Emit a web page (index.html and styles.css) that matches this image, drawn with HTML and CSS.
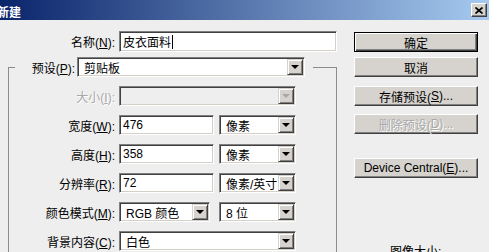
FILE: index.html
```html
<!DOCTYPE html>
<html lang="zh-CN">
<head>
  <meta charset="UTF-8">
  <title>新建</title>
  <link rel="stylesheet" href="styles.css">
</head>
<body>
  <div class="titlebar">
    <span class="title">新建</span>
    <span class="close">
      <svg width="8" height="7" viewBox="0 0 8 7"><path d="M0.5 0.5 L7.5 6.5 M7.5 0.5 L0.5 6.5" stroke="#000" stroke-width="1.7" fill="none"/></svg>
    </span>
  </div>

  <div class="dialog">
    <!-- left: document settings -->
    <div class="form">
      <div class="row name-row">
        <span class="lbl">名称(<u>N</u>):</span>
        <div class="field edit name">皮衣面料<span class="caret"></span></div>
      </div>

      <fieldset class="group">
        <legend class="preset">
          <span class="lbl preset-lbl">预设(<u>P</u>):</span>
          <div class="field select preset-sel"><span class="val">剪贴板</span><span class="arrow"></span></div>
        </legend>

        <div class="row">
          <span class="lbl disabled">大小(<u>I</u>):</span>
          <div class="field select wide off"><span class="val"></span><span class="arrow"></span></div>
        </div>
        <div class="row">
          <span class="lbl">宽度(<u>W</u>):</span>
          <div class="field edit num">476</div>
          <div class="field select unit"><span class="val">像素</span><span class="arrow"></span></div>
        </div>
        <div class="row">
          <span class="lbl">高度(<u>H</u>):</span>
          <div class="field edit num">358</div>
          <div class="field select unit"><span class="val">像素</span><span class="arrow"></span></div>
        </div>
        <div class="row">
          <span class="lbl">分辨率(<u>R</u>):</span>
          <div class="field edit num">72</div>
          <div class="field select unit"><span class="val">像素/英寸</span><span class="arrow"></span></div>
        </div>
        <div class="row">
          <span class="lbl">颜色模式(<u>M</u>):</span>
          <div class="field select mode"><span class="val">RGB 颜色</span><span class="arrow"></span></div>
          <div class="field select bits"><span class="val">8 位</span><span class="arrow"></span></div>
        </div>
        <div class="row">
          <span class="lbl">背景内容(<u>C</u>):</span>
          <div class="field select wide"><span class="val">白色</span><span class="arrow"></span></div>
        </div>
      </fieldset>
    </div>

    <!-- right: buttons -->
    <div class="side">
      <div class="btn default">确定</div>
      <div class="btn cancel">取消</div>
      <div class="btn save">存储预设(<u>S</u>)...</div>
      <div class="btn delete disabled">删除预设(<u>D</u>)...</div>
      <div class="btn device">Device Central(<u>E</u>)...</div>
      <div class="imgsize">图像大小:</div>
    </div>
  </div>
</body>
</html>
```

FILE: styles.css
```css
* {
  box-sizing: border-box;
}

body {
  margin: 0;
  width: 489px;
  height: 252px;
  overflow: hidden;
  background: #eeeeee;
  font-family: "Liberation Sans", "Noto Sans CJK SC", sans-serif;
  font-size: 12px;
  color: #000;
}

u {
  text-decoration: underline;
  text-underline-offset: 1px;
}

/* title bar */
.titlebar {
  height: 20px;
  display: flex;
  align-items: center;
  justify-content: space-between;
  background: linear-gradient(to right, #0a246a, #a6caf0);
}

.title {
  color: #fff;
  font-weight: bold;
  margin-left: -3px;
  padding-top: 2px;
}

.close {
  width: 16px;
  height: 14px;
  margin-right: 2px;
  display: flex;
  align-items: center;
  justify-content: center;
  background: #d6d3ce;
  border: 1px solid;
  border-color: #fff #404040 #404040 #fff;
  box-shadow: inset -1px -1px #808080;
}

/* dialog body */
.dialog {
  display: flex;
  padding-top: 11px;
}

.form {
  width: 337px;
  flex: none;
}

.row {
  display: flex;
  align-items: center;
  height: 20px;
}

.name-row {
  height: 21px;
}

.lbl {
  width: 115px;
  flex: none;
  text-align: right;
  white-space: nowrap;
}

.disabled {
  color: #a8a8a8;
  text-shadow: 1px 1px #fff;
}

/* sunken fields */
.field {
  height: 100%;
  margin-left: 4px;
  display: flex;
  align-items: center;
  background: #fff;
  border: 1px solid;
  border-color: #808080 #fff #fff #808080;
  box-shadow: inset 1px 1px #404040, inset -1px -1px #d4d0c8;
  white-space: nowrap;
  overflow: hidden;
}

.edit {
  padding: 0 2px 0 3px;
}

.caret {
  width: 1px;
  height: 14px;
  margin-left: 1px;
  background: #000;
}

.select {
  padding: 0 1px 0 6px;
}

.select .val {
  flex: 1;
  overflow: hidden;
}

.arrow {
  width: 16px;
  height: 16px;
  flex: none;
  display: flex;
  align-items: center;
  justify-content: center;
  background: #d6d3ce;
  border: 1px solid;
  border-color: #d6d3ce #404040 #404040 #d6d3ce;
  box-shadow: inset 1px 1px #fff, inset -1px -1px #808080;
}

.arrow::after {
  content: "";
  border-style: solid;
  border-width: 4px 4px 0;
  border-color: #000 transparent transparent;
}

.off {
  background: #eeeeee;
}

.off .arrow::after {
  border-top-color: #a8a8a8;
}

.name { width: 218px; }
.num { width: 95px; }
.unit { width: 77px; margin-left: 5px; }
.mode { width: 91px; }
.bits { width: 77px; margin-left: 9px; }
.wide { width: 177px; }

/* preset group box */
.group {
  margin: 5px 0 0 8px;
  padding: 9px 0 0;
  min-width: 0;
  height: 200px;
  border: 1px solid #8c8c8c;
  border-bottom: none;
  display: flex;
  flex-direction: column;
  gap: 9px;
}

.group .lbl {
  width: 106px;
}

.preset {
  margin-left: 6px;
  padding: 0 8px 0 0;
  height: 20px;
  display: flex;
  align-items: center;
}

.group .preset-lbl {
  width: 60px;
}

.preset-sel {
  width: 228px;
  margin-left: 2px;
}

/* buttons */
.side {
  width: 124px;
  margin-left: 17px;
  padding-top: 1px;
  display: flex;
  flex-direction: column;
}

.btn {
  height: 20px;
  display: flex;
  align-items: center;
  justify-content: center;
  background: #d6d3ce;
  border: 1px solid;
  border-color: #fff #404040 #404040 #fff;
  box-shadow: inset -1px -1px #808080;
  white-space: nowrap;
}

.btn.default {
  border-color: #000;
  box-shadow: inset 1px 1px #fff, inset -1px -1px #404040, inset -2px -2px #808080;
}

.cancel { margin-top: 5px; }
.save { margin-top: 9px; }
.delete { margin-top: 8px; }
.device { margin-top: 24px; }

.imgsize {
  margin: 64px 0 0 36px;
  white-space: nowrap;
}
```
